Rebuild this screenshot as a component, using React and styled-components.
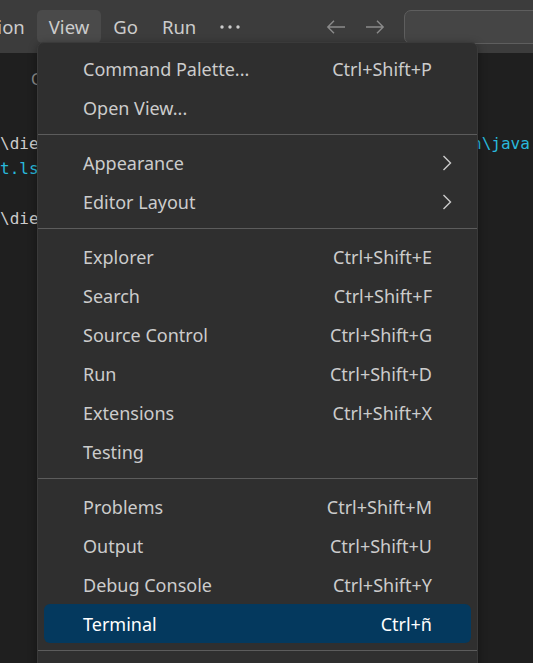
import styled, { createGlobalStyle } from "styled-components";

const GlobalStyle = createGlobalStyle`
  html, body {
    margin: 0;
    padding: 0;
    height: 663px;
    overflow: hidden;
    background: #1f1f1f;
  }
  * { box-sizing: border-box; }
`;

const Window = styled.div`
  position: relative;
  width: 533px;
  height: 663px;
  overflow: hidden;
  background: #1f1f1f;
  font-family: "Noto Sans", "Open Sans", sans-serif;
`;

const TitleBar = styled.div`
  display: flex;
  align-items: center;
  height: 53px;
  background: #3c3c3c;
  overflow: hidden;
  white-space: nowrap;
`;

const MenuBar = styled.div`
  display: flex;
  align-items: center;
  margin-left: -66px;
`;

const MenuBarItem = styled.div`
  display: flex;
  align-items: center;
  height: 33px;
  padding: 0 12px;
  border-radius: 5px;
  font-size: 18.5px;
  color: #cccccc;
  background: ${(p) => (p.$open ? "#4a4a4a" : "transparent")};
`;

const Nav = styled.div`
  display: flex;
  align-items: center;
  gap: 19px;
  margin-left: 74px;
`;

const SearchBox = styled.div`
  flex: none;
  width: 200px;
  height: 34px;
  margin-left: 19px;
  border: 1px solid #5e5e5e;
  border-radius: 7px;
  background: #454545;
`;

const Editor = styled.div`
  padding-top: 14px;
  font-family: "DejaVu Sans Mono", "Liberation Mono", monospace;
  font-size: 16px;
  line-height: 25px;
  white-space: pre;
  color: #cccccc;
`;

const TabLabel = styled.div`
  padding-left: 31px;
  font-family: "Noto Sans", sans-serif;
  font-size: 16px;
  color: #8b8b8b;
`;

const Lines = styled.div`
  margin-top: 39px;
`;

const Line = styled.div`
  height: 25px;
`;

const Str = styled.span`
  color: #29b8db;
`;

const Menu = styled.div`
  position: absolute;
  top: 42px;
  left: 37px;
  width: 441px;
  padding: 6px 0;
  background: #2f2f2f;
  border: 1px solid #3a3a3a;
  border-radius: 7px;
  box-shadow: 0 2px 8px rgba(0, 0, 0, 0.36);
  font-size: 18px;
  color: #cccccc;
`;

const Item = styled.div`
  display: flex;
  align-items: center;
  height: 39px;
  margin: 0 6px;
  border-radius: 6px;
  background: ${(p) => (p.$active ? "#04395e" : "transparent")};
  color: ${(p) => (p.$active ? "#ffffff" : "#cccccc")};
`;

const Label = styled.span`
  padding-left: 39px;
`;

const Keys = styled.span`
  margin-left: auto;
  padding-right: 39px;
`;

const SubArrow = styled.span`
  display: flex;
  margin-left: auto;
  margin-right: 19px;
`;

const Separator = styled.div`
  height: 1px;
  margin: 7px 0 8px;
  background: #5c5c5c;
`;

const Arrow = ({ dir }) => (
  <svg width="20" height="20" viewBox="0 0 20 20" fill="none" stroke="#8b8b8b" strokeWidth="1.4">
    {dir === "left" ? (
      <path d="M1.5 10H19M8 3.8L1.8 10L8 16.2" />
    ) : (
      <path d="M18.5 10H1M12 3.8L18.2 10L12 16.2" />
    )}
  </svg>
);

const Dots = () => (
  <svg width="20" height="4" viewBox="0 0 20 4" fill="#cccccc">
    <circle cx="2" cy="2" r="1.7" />
    <circle cx="10" cy="2" r="1.7" />
    <circle cx="18" cy="2" r="1.7" />
  </svg>
);

const Chevron = () => (
  <svg width="10" height="16" viewBox="0 0 10 16" fill="none" stroke="#cccccc" strokeWidth="1.4">
    <path d="M1.5 1L8.5 8L1.5 15" />
  </svg>
);

const groups = [
  [
    { label: "Command Palette...", keys: "Ctrl+Shift+P" },
    { label: "Open View..." },
  ],
  [
    { label: "Appearance", sub: true },
    { label: "Editor Layout", sub: true },
  ],
  [
    { label: "Explorer", keys: "Ctrl+Shift+E" },
    { label: "Search", keys: "Ctrl+Shift+F" },
    { label: "Source Control", keys: "Ctrl+Shift+G" },
    { label: "Run", keys: "Ctrl+Shift+D" },
    { label: "Extensions", keys: "Ctrl+Shift+X" },
    { label: "Testing" },
  ],
  [
    { label: "Problems", keys: "Ctrl+Shift+M" },
    { label: "Output", keys: "Ctrl+Shift+U" },
    { label: "Debug Console", keys: "Ctrl+Shift+Y" },
    { label: "Terminal", keys: "Ctrl+ñ", active: true },
  ],
  [{ label: "Word Wrap", keys: "Alt+Z" }],
];

function App() {
  return (
    <Window>
      <GlobalStyle />
      <TitleBar>
        <MenuBar>
          <MenuBarItem>Selection</MenuBarItem>
          <MenuBarItem $open>View</MenuBarItem>
          <MenuBarItem>Go</MenuBarItem>
          <MenuBarItem>Run</MenuBarItem>
          <MenuBarItem>
            <Dots />
          </MenuBarItem>
        </MenuBar>
        <Nav>
          <Arrow dir="left" />
          <Arrow dir="right" />
        </Nav>
        <SearchBox />
      </TitleBar>

      <Editor>
        <TabLabel>Consola</TabLabel>
        <Lines>
          <Line>
            {"\\diego\\Documents\\Proyecto> & "}
            <Str>{"'C:\\Program Files\\bin\\java.exe' '-XX:+ShowCodeDetailsInExceptionMessages'"}</Str>
          </Line>
          <Line>
            <Str>{"t.lsp.java.exe' 'Main'"}</Str>
          </Line>
          <Line />
          <Line>{"\\diego\\Documents\\Proyecto> "}</Line>
        </Lines>
      </Editor>

      <Menu>
        {groups.map((group, gi) => (
          <div key={gi}>
            {gi > 0 && <Separator />}
            {group.map((item) => (
              <Item key={item.label} $active={item.active}>
                <Label>{item.label}</Label>
                {item.keys && <Keys>{item.keys}</Keys>}
                {item.sub && (
                  <SubArrow>
                    <Chevron />
                  </SubArrow>
                )}
              </Item>
            ))}
          </div>
        ))}
      </Menu>
    </Window>
  );
}

export default App;
